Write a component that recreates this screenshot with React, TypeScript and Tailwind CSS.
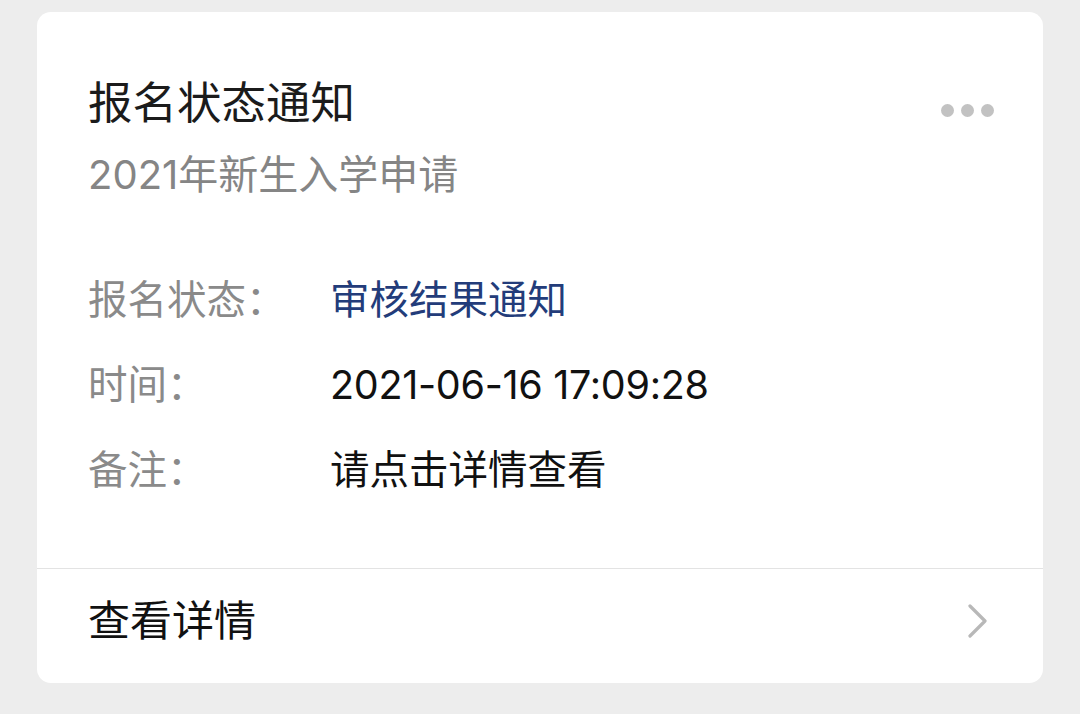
import React from 'react';

const rows = [
  { label: '报名状态：', value: '审核结果通知', cls: 'text-[#233c7a]' },
  { label: '时间：', value: '2021-06-16 17:09:28', cls: 'text-[#111111] tracking-[-0.3px]' },
  { label: '备注：', value: '请点击详情查看', cls: 'text-[#111111]' },
];

export default function App() {
  return (
    <div
      className="min-h-[714px] w-[1080px] bg-[#ededed] pt-[12px] pb-[31px] px-[37px]"
      style={{ fontFamily: 'Inter, "Noto Sans CJK SC", sans-serif' }}
    >
      <div className="flex h-[671px] flex-col rounded-[14px] bg-white">
        {/* header */}
        <div className="flex items-start justify-between pl-[51px] pr-[49px] pt-[63px]">
          <div>
            <div className="text-[44.5px] leading-[56px] text-[#1b1b1b]">报名状态通知</div>
            <div className="mt-[19px] text-[40px] leading-[50px] text-[#858585]">2021年新生入学申请</div>
          </div>
          <div className="mt-[29px] flex gap-[7px]">
            <span className="h-[13px] w-[13px] rounded-full bg-[#c2c2c2]" />
            <span className="h-[13px] w-[13px] rounded-full bg-[#c2c2c2]" />
            <span className="h-[13px] w-[13px] rounded-full bg-[#c2c2c2]" />
          </div>
        </div>

        {/* fields */}
        <div className="mt-[75px] flex flex-col gap-[35px] pl-[51px]">
          {rows.map((r) => (
            <div key={r.label} className="flex text-[39.5px] leading-[50px]">
              <div className="w-[242px] shrink-0 text-[#8a8a8a]">{r.label}</div>
              <div className={r.cls}>{r.value}</div>
            </div>
          ))}
        </div>

        <div className="flex-1" />

        {/* footer */}
        <div className="flex items-center justify-between border-t border-[#e3e3e3] pl-[51px] pr-[56px] pt-[27px] pb-[37px]">
          <div className="text-[42px] leading-[50px] text-[#111111]">查看详情</div>
          <svg width="19" height="34" viewBox="0 0 19 34" fill="none">
            <polyline points="2,2 17,17 2,32" stroke="#b8b8b8" strokeWidth="3.2" strokeLinecap="round" strokeLinejoin="round" />
          </svg>
        </div>
      </div>
    </div>
  );
}
